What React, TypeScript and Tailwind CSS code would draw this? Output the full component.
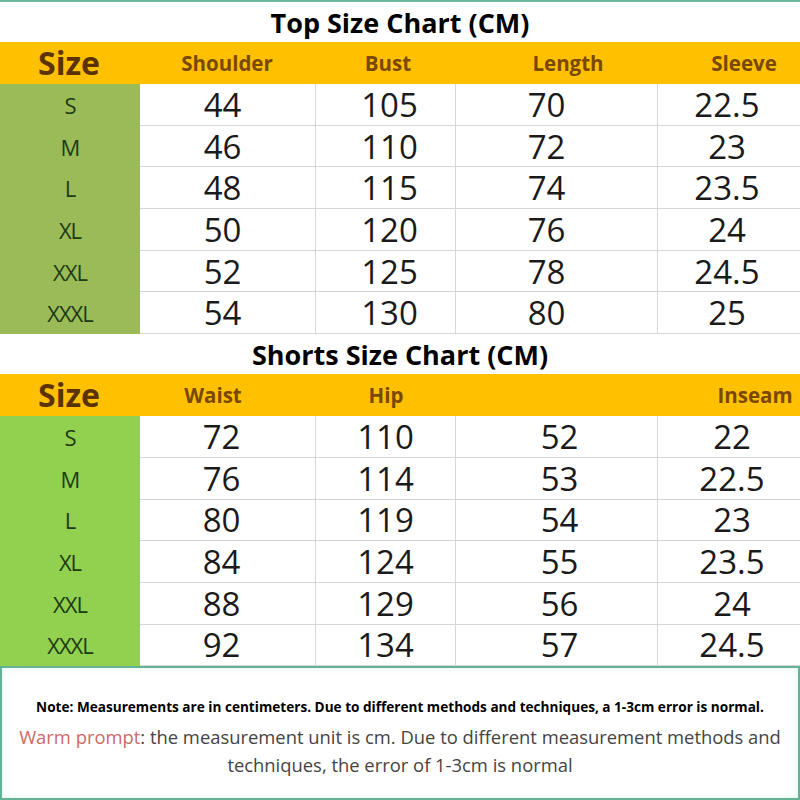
const cols = "grid grid-cols-[140px_176px_140px_202px_142px]";

type Cell = { v: string; cls: string };

const topHeads: Cell[] = [
  { v: "Shoulder", cls: "pr-[2px]" },
  { v: "Bust", cls: "pl-[4px]" },
  { v: "Length", cls: "pl-[22px]" },
  { v: "Sleeve", cls: "pl-[30px]" },
];

const topOffsets = ["pr-[10px]", "pl-[8px]", "pr-[20px]", "pr-[4px]"];

const topRows = [
  ["S", "44", "105", "70", "22.5"],
  ["M", "46", "110", "72", "23"],
  ["L", "48", "115", "74", "23.5"],
  ["XL", "50", "120", "76", "24"],
  ["XXL", "52", "125", "78", "24.5"],
  ["XXXL", "54", "130", "80", "25"],
];

const shortHeads: Cell[] = [
  { v: "Waist", cls: "pr-[30px]" },
  { v: "Hip", cls: "" },
  { v: "", cls: "" },
  { v: "Inseam", cls: "pl-[52px]" },
];

const shortOffsets = ["pr-[12px]", "", "pl-[6px]", "pl-[6px]"];

const shortRows = [
  ["S", "72", "110", "52", "22"],
  ["M", "76", "114", "53", "22.5"],
  ["L", "80", "119", "54", "23"],
  ["XL", "84", "124", "55", "23.5"],
  ["XXL", "88", "129", "56", "24"],
  ["XXXL", "92", "134", "57", "24.5"],
];

function Chart({
  title,
  heads,
  rows,
  offsets,
  green,
}: {
  title: string;
  heads: Cell[];
  rows: string[][];
  offsets: string[];
  green: string;
}) {
  return (
    <div>
      <div className="h-[40px] flex items-center justify-center leading-none text-[27px] font-bold text-black">
        {title}
      </div>
      <div className={`${cols} h-[42px] bg-[#FFC000] leading-none`}>
        <div className="flex items-center justify-center pr-[2px] text-[32px] font-bold text-[#5a3300]">
          Size
        </div>
        {heads.map((h, i) => (
          <div
            key={i}
            className={`flex items-center justify-center text-[20.5px] font-bold text-[#7a4800] ${h.cls}`}
          >
            {h.v}
          </div>
        ))}
      </div>
      {rows.map((r) => (
        <div key={r[0]} className={`${cols} h-[41.7px] leading-none`}>
          <div
            className={`flex items-center justify-center text-[22px] tracking-[-1px] text-[#1e3a12] ${green}`}
          >
            {r[0]}
          </div>
          {r.slice(1).map((v, i) => (
            <div
              key={i}
              className={`flex items-center justify-center text-[33px] text-[#1a1a1a] border-b border-[#d6d6d6] ${
                i < 3 ? "border-r" : ""
              } ${offsets[i]}`}
            >
              {v}
            </div>
          ))}
        </div>
      ))}
    </div>
  );
}

export default function App() {
  return (
    <div
      className="w-[800px] h-[800px] bg-white border-t-2 border-[#6bb79a] overflow-hidden flex flex-col"
      style={{ fontFamily: '"Open Sans", "Noto Sans", sans-serif' }}
    >
      <Chart
        title="Top Size Chart (CM)"
        heads={topHeads}
        rows={topRows}
        offsets={topOffsets}
        green="bg-[#9BBB59]"
      />
      <Chart
        title="Shorts Size Chart (CM)"
        heads={shortHeads}
        rows={shortRows}
        offsets={shortOffsets}
        green="bg-[#92D050]"
      />
      <div className="flex-1 border-2 border-[#63b394] shadow-[inset_0_0_8px_#e3f6ee] flex flex-col items-center pt-[29px]">
        <p className="text-[13.6px] font-bold text-black leading-[20px]">
          Note: Measurements are in centimeters. Due to different methods and
          techniques, a 1-3cm error is normal.
        </p>
        <p className="mt-[6px] text-[18.4px] text-[#444] leading-[28px] text-center px-[10px]">
          <span className="text-[#cc6a66]">Warm prompt</span>: the measurement
          unit is cm. Due to different measurement methods and techniques, the
          error of 1-3cm is normal
        </p>
      </div>
    </div>
  );
}
